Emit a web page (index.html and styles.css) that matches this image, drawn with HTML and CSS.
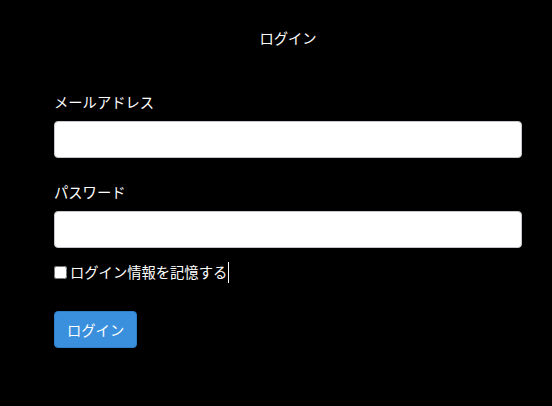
FILE: index.html
```html
<!DOCTYPE html>
<html lang="ja">
<head>
<meta charset="utf-8">
<title>ログイン</title>
<link rel="stylesheet" href="styles.css">
</head>
<body>
<main class="page">
  <h1 class="title">ログイン</h1>
  <form class="form">
    <label class="label" for="email">メールアドレス</label>
    <input class="input" id="email" type="email">
    <label class="label label-gap" for="password">パスワード</label>
    <input class="input" id="password" type="password">
    <div class="remember">
      <input class="check" id="remember" type="checkbox">
      <label class="remember-text" for="remember">ログイン情報を記憶する</label><span class="caret"></span>
    </div>
    <button class="button" type="button">ログイン</button>
  </form>
</main>
</body>
</html>
```
FILE: styles.css
```css
html, body {
  margin: 0;
  background: #000;
  color: #fff;
  font-family: "Noto Sans CJK JP", "Noto Sans", sans-serif;
  font-size: 14.3px;
}
.page {
  padding: 28px 30px 0 54px;
}
.title {
  margin: 0;
  font-size: 14.3px;
  font-weight: normal;
  line-height: 20px;
  text-align: center;
}
.form {
  display: flex;
  flex-direction: column;
  align-items: flex-start;
  margin-top: 44px;
  width: 468px;
}
.label {
  display: block;
  line-height: 20px;
  margin-bottom: 9px;
}
.label-gap {
  margin-top: 24px;
}
.input {
  box-sizing: border-box;
  width: 468px;
  height: 37px;
  margin: 0;
  border: 1px solid #c4c8cc;
  border-radius: 4px;
  background: #fff;
  padding: 0 10px;
  font: inherit;
  outline: none;
}
.remember {
  display: flex;
  align-items: center;
  margin-top: 14px;
  height: 20px;
}
.check {
  width: 13px;
  height: 13px;
  margin: 0 3px 0 0;
}
.remember-text {
  line-height: 20px;
}
.caret {
  display: inline-block;
  width: 1px;
  height: 21px;
  background: #fff;
  margin-left: 1px;
}
.button {
  margin-top: 29px;
  height: 37px;
  padding: 0 12px;
  border: 1px solid #2f7fc8;
  border-radius: 4px;
  background: #3a90dd;
  color: #fff;
  font: inherit;
  cursor: pointer;
}
```
